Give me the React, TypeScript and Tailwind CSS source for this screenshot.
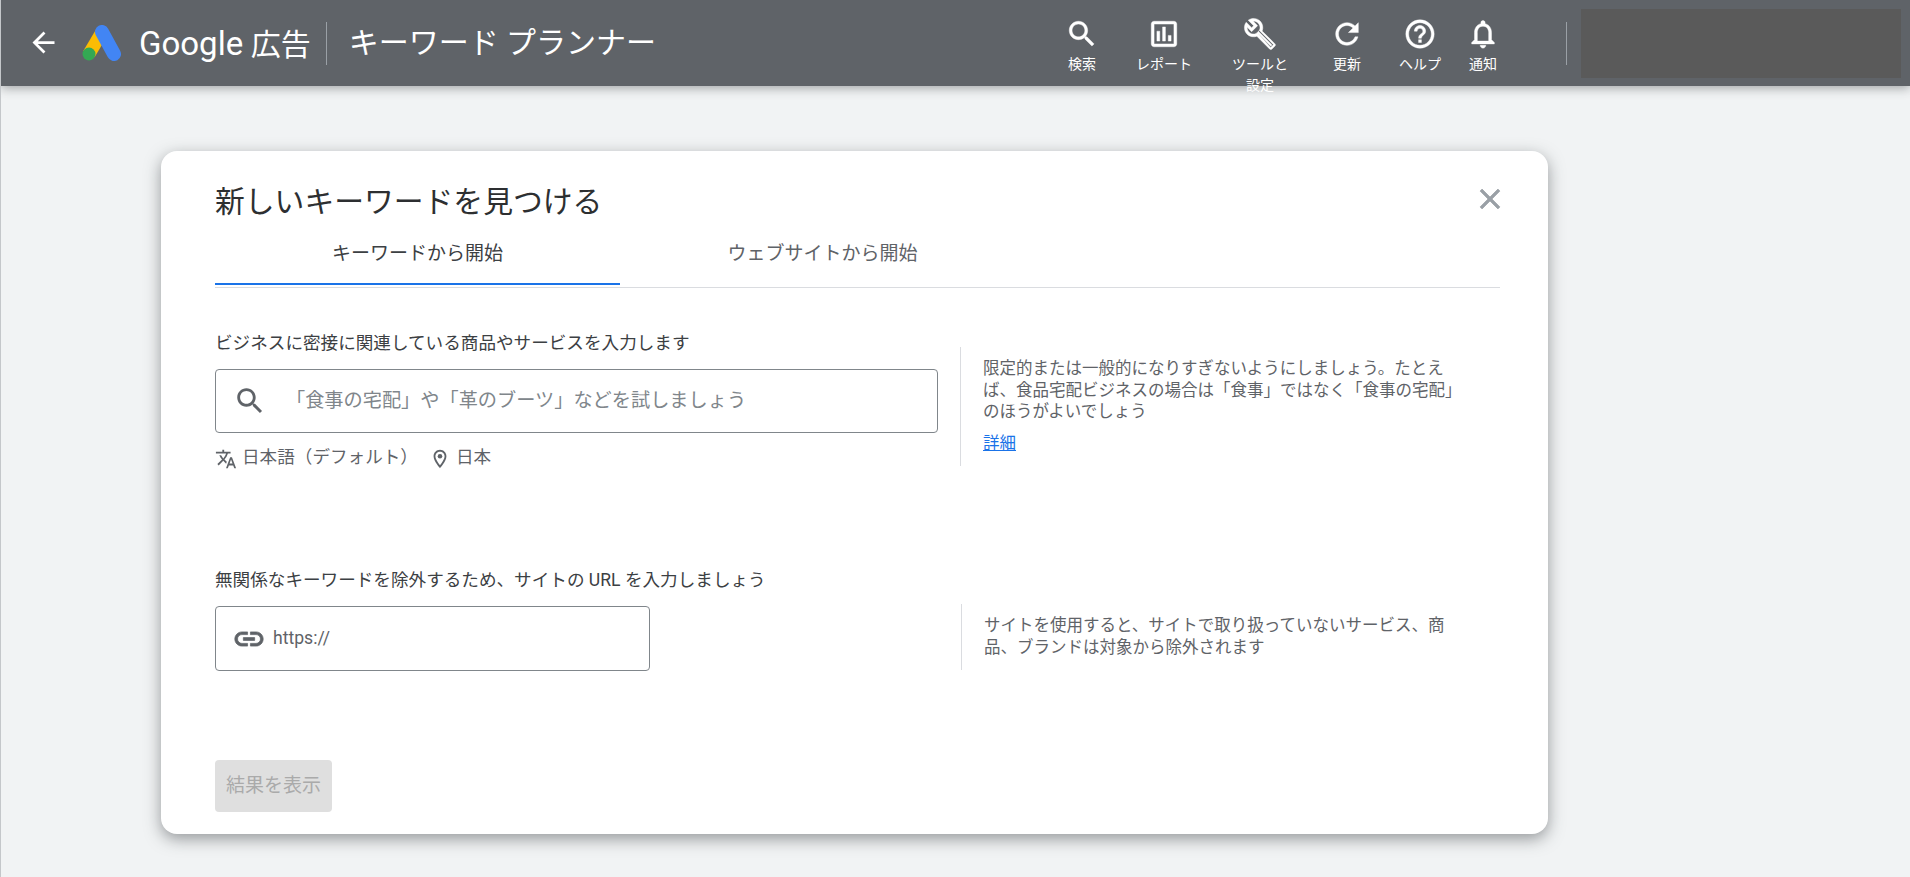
const font = "font-['Roboto','Noto_Sans_CJK_JP',sans-serif]";

const Icon = ({ d, className, children }: { d?: string; className?: string; children?: React.ReactNode }) => (
  <svg viewBox="0 0 24 24" fill="currentColor" className={className}>
    {d && <path d={d} />}
    {children}
  </svg>
);

const icons = {
  back: 'M20 11H7.83l5.59-5.59L12 4l-8 8 8 8 1.41-1.41L7.83 13H20v-2z',
  search:
    'M15.5 14h-.79l-.28-.27C15.41 12.59 16 11.11 16 9.5 16 5.91 13.09 3 9.5 3S3 5.91 3 9.5 5.91 16 9.5 16c1.61 0 3.09-.59 4.23-1.57l.27.28v.79l5 4.99L20.49 19l-4.99-5zm-6 0C7.01 14 5 11.99 5 9.5S7.01 5 9.5 5 14 7.01 14 9.5 11.99 14 9.5 14z',
  report:
    'M9 17H7v-7h2v7zm4 0h-2V7h2v10zm4 0h-2v-4h2v4zm2 2H5V5h14v14zm0-16H5c-1.1 0-2 .9-2 2v14c0 1.1.9 2 2 2h14c1.1 0 2-.9 2-2V5c0-1.1-.9-2-2-2z',
  // outlined wrench with the handle filled in
  wrench:
    'M22.61 18.99l-9.08-9.08c.93-2.34.45-5.1-1.44-7C9.79.61 6.21.4 3.66 2.26L7.5 6.11 6.08 7.52 2.25 3.69C.39 6.23.6 9.82 2.9 12.11c1.86 1.86 4.57 2.35 6.89 1.48l9.11 9.11c.39.39 1.02.39 1.41 0l2.3-2.3c.4-.38.4-1.01 0-1.41zm-3 1.6l-9.46-9.46c-.61.45-1.29.72-2 .82-1.36.2-2.79-.21-3.83-1.25C3.37 9.76 2.93 8.5 3 7.26l3.09 3.09 4.24-4.24-3.09-3.09c1.24-.07 2.49.37 3.44 1.31 1.08 1.08 1.49 2.57 1.24 3.96-.12.71-.42 1.37-.88 1.96l9.45 9.45-.88.88zM10 11l1.5-1.5 10 10-2 2z',
  refresh:
    'M17.65 6.35C16.2 4.9 14.21 4 12 4c-4.42 0-7.99 3.58-7.99 8s3.57 8 7.99 8c3.73 0 6.84-2.55 7.73-6h-2.08c-.82 2.33-3.04 4-5.65 4-3.31 0-6-2.69-6-6s2.69-6 6-6c1.66 0 3.14.69 4.22 1.78L13 11h7V4l-2.35 2.35z',
  help:
    'M11 18h2v-2h-2v2zm1-16C6.48 2 2 6.48 2 12s4.48 10 10 10 10-4.48 10-10S17.52 2 12 2zm0 18c-4.41 0-8-3.59-8-8s3.59-8 8-8 8 3.59 8 8-3.59 8-8 8zm0-14c-2.21 0-4 1.79-4 4h2c0-1.1.9-2 2-2s2 .9 2 2c0 2-3 1.75-3 5h2c0-2.25 3-2.5 3-5 0-2.21-1.79-4-4-4z',
  bell:
    'M12 22c1.1 0 2-.9 2-2h-4c0 1.1.89 2 2 2zm6-6v-5c0-3.07-1.64-5.64-4.5-6.32V4c0-.83-.67-1.5-1.5-1.5s-1.5.67-1.5 1.5v.68C7.63 5.36 6 7.92 6 11v5l-2 2v1h16v-1l-2-2zm-2 1H8v-6c0-2.48 1.51-4.5 4-4.5s4 2.02 4 4.5v6z',
  translate:
    'M12.87 15.07l-2.54-2.51.03-.03c1.74-1.94 2.98-4.17 3.71-6.53H17V4h-7V2H8v2H1v1.99h11.17C11.5 7.92 10.44 9.75 9 11.35 8.07 10.32 7.3 9.19 6.69 8h-2c.73 1.63 1.73 3.17 2.98 4.56l-5.09 5.02L4 19l5-5 3.11 3.11.76-2.04zM18.5 10h-2L12 22h2l1.12-3h4.75L21 22h2l-4.5-12zm-2.62 7l1.62-4.33L19.12 17h-3.24z',
  pin: 'M12 2C8.13 2 5 5.13 5 9c0 5.25 7 13 7 13s7-7.75 7-13c0-3.87-3.13-7-7-7zM7 9c0-2.76 2.24-5 5-5s5 2.24 5 5c0 2.88-2.88 7.19-5 9.88C9.92 16.21 7 11.85 7 9z',
  link: 'M3.9 12c0-1.71 1.39-3.1 3.1-3.1h4V7H7c-2.76 0-5 2.24-5 5s2.24 5 5 5h4v-1.9H7c-1.71 0-3.1-1.39-3.1-3.1zM8 13h8v-2H8v2zm9-6h-4v1.9h4c1.71 0 3.1 1.39 3.1 3.1s-1.39 3.1-3.1 3.1h-4V17h4c2.76 0 5-2.24 5-5s-2.24-5-5-5z',
  close:
    'M19 6.41L17.59 5 12 10.59 6.41 5 5 6.41 10.59 12 5 17.59 6.41 19 12 13.41 17.59 19 19 17.59 13.41 12z',
};

const navItems = [
  { label: '検索', icon: icons.search, margin: 'ml-0' },
  { label: 'レポート', icon: icons.report, margin: 'ml-[20px]' },
  { label: 'ツールと設定', icon: icons.wrench, margin: 'ml-[34px]' },
  { label: '更新', icon: icons.refresh, margin: 'ml-[25px]' },
  { label: 'ヘルプ', icon: icons.help, margin: 'ml-[11px]' },
  { label: '通知', icon: icons.bell, margin: 'ml-[1px]' },
];

const AdsLogo = () => (
  <svg viewBox="0 0 39 36" className="w-[39px] h-[36px] ml-[22px] shrink-0">
    <path d="M20 7 L7 29" stroke="#fbbc04" strokeWidth="13" />
    <circle cx="7" cy="29" r="6.5" fill="#34a853" />
    <path d="M20 7 L32 29" stroke="#4285f4" strokeWidth="14" strokeLinecap="round" />
  </svg>
);

const Header = () => (
  <header className="relative z-10 flex items-start h-[86px] bg-[#5f6368] text-white shadow-[0_2px_10px_rgba(60,64,67,0.45)] pr-[9px]">
    <Icon d={icons.back} className="w-[33px] h-[33px] ml-[26px] mt-[26px] shrink-0" />
    <div className="flex items-center h-[86px]">
      <AdsLogo />
      <div className="ml-[18px] text-[30px] leading-none whitespace-nowrap">
        <span className="text-[33px]">Google</span> 広告
      </div>
      <div className="w-px h-[43px] bg-[#9aa0a6] ml-[15px]" />
      <div className="ml-[22px] text-[30px] leading-none whitespace-nowrap">キーワード プランナー</div>
    </div>
    <nav className="ml-auto flex items-start">
      {navItems.map(item => (
        <div key={item.label} className={`w-[62px] flex flex-col items-center pt-[17px] ${item.margin}`}>
          <Icon d={item.icon} className="w-[34px] h-[34px] stroke-current stroke-[0.3]" />
          <div className="mt-[3px] text-[14px] leading-[21px] text-center">{item.label}</div>
        </div>
      ))}
    </nav>
    <div className="w-px h-[43px] bg-[#9aa0a6] mt-[22px] ml-[52px]" />
    <div className="w-[320px] h-[69px] bg-[#5a5a5a] mt-[9px] ml-[14px]" />
  </header>
);

const Hint = ({ className, children }: { className: string; children: React.ReactNode }) => (
  <div className={`border-l border-[#dadce0] pl-[22px] pr-[20px] whitespace-nowrap text-[16.5px] leading-[21.7px] text-[#5f6368] ${className}`}>
    {children}
  </div>
);

export default function App() {
  return (
    <div className={`h-[877px] overflow-hidden bg-[#f1f3f4] border-l border-[#c4c7ca] ${font}`}>
      <Header />
      <main className="ml-[160px] mt-[65px] w-[1387px] h-[683px] rounded-[16px] bg-white shadow-[0_5px_16px_rgba(60,64,67,0.5)] pl-[54px] pr-[48px] pt-[33px]">
        <div className="flex items-start justify-between">
          <h1 className="text-[29.8px] leading-[36px] text-[#2d2f31] whitespace-nowrap">新しいキーワードを見つける</h1>
          <Icon d={icons.close} className="w-[34px] h-[34px] text-[#9aa0a6] stroke-current stroke-[0.5] -mr-[7px] -mt-[2px]" />
        </div>

        <div className="flex h-[52px] mt-[16px] border-b border-[#dadce0]">
          <div className="w-[405px] h-[49px] pt-[6px] border-b-2 border-[#1a73e8] text-center text-[19px] leading-[24px] text-[#3c4043]">
            キーワードから開始
          </div>
          <div className="w-[405px] pt-[6px] text-center text-[19px] leading-[24px] text-[#5f6368]">
            ウェブサイトから開始
          </div>
        </div>

        <div className="flex items-start mt-[42px]">
          <div className="w-[745px] shrink-0">
            <div className="pt-[1px] text-[17.6px] leading-[24px] text-[#3c4043]">
              ビジネスに密接に関連している商品やサービスを入力します
            </div>
            <div className="flex items-center w-[723px] h-[64px] mt-[14px] rounded-[4px] border border-[#80868b]">
              <Icon d={icons.search} className="w-[34px] h-[34px] ml-[17px] text-[#5f6368]" />
              <div className="ml-[19px] text-[19.2px] text-[#80868b]">「食事の宅配」や「革のブーツ」などを試しましょう</div>
            </div>
            <div className="flex items-center mt-[11px] text-[17.6px] leading-[24px] text-[#5f6368]">
              <Icon d={icons.translate} className="w-[22px] h-[22px] mt-[4px] shrink-0" />
              <span className="ml-[5px]">日本語（デフォルト）</span>
              <Icon d={icons.pin} className="w-[22px] h-[22px] ml-[11px] mt-[4px] shrink-0">
                <circle cx="12" cy="9" r="2.5" />
              </Icon>
              <span className="ml-[5px]">日本</span>
            </div>
          </div>
          <Hint className="h-[119px] mt-[17px] pt-[11px]">
            限定的または一般的になりすぎないようにしましょう。たとえ
            <br />
            ば、食品宅配ビジネスの場合は「食事」ではなく「食事の宅配」
            <br />
            のほうがよいでしょう
            <a className="block mt-[10px] text-[#1a73e8] underline">詳細</a>
          </Hint>
        </div>

        <div className="flex items-start mt-[98px]">
          <div className="w-[746px] shrink-0">
            <div className="text-[17.6px] leading-[24px] text-[#3c4043]">
              無関係なキーワードを除外するため、サイトの URL を入力しましょう
            </div>
            <div className="flex items-center w-[435px] h-[65px] mt-[14px] rounded-[4px] border border-[#80868b]">
              <Icon d={icons.link} className="w-[34px] h-[34px] ml-[16px] text-[#5f6368] stroke-current stroke-[0.5]" />
              <div className="ml-[7px] text-[17.6px] text-[#5f6368]">https://</div>
            </div>
          </div>
          <Hint className="h-[66px] mt-[36px] pt-[11px]">
            サイトを使用すると、サイトで取り扱っていないサービス、商
            <br />
            品、ブランドは対象から除外されます
          </Hint>
        </div>

        <button className="w-[117px] h-[52px] mt-[89px] rounded-[4px] bg-[#dfdfdf] text-[19px] text-[#aaaaaa]">
          結果を表示
        </button>
      </main>
    </div>
  );
}
